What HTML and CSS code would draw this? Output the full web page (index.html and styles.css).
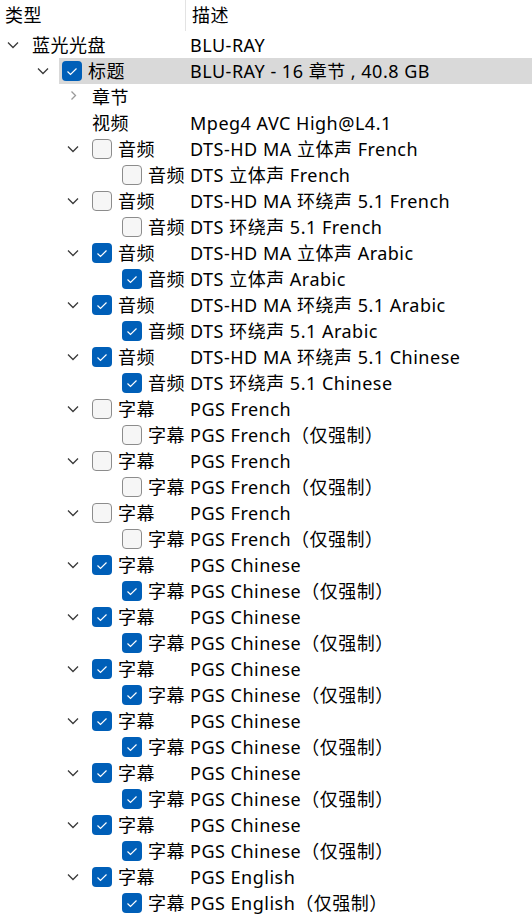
FILE: index.html
```html
<!DOCTYPE html>
<html lang="zh-CN">
<head>
<meta charset="utf-8">
<title>Tree</title>
<link rel="stylesheet" href="styles.css">
</head>
<body>
<div class="tree">
  <div class="header">
    <div class="hcell first">类型</div>
    <div class="hcell second">描述</div>
  </div>
  <div id="rows" class="rows"></div>
</div>
<script>
var D='<svg class="chev" width="32" height="26" viewBox="0 0 32 26"><path d="M8 10.5 L13 15.5 L18 10.5" fill="none" stroke="#3a3a3a" stroke-width="1.3"/></svg>';
var R='<svg class="chev" width="32" height="26" viewBox="0 0 32 26"><path d="M11.5 7.5 L15.5 11.5 L11.5 15.5" fill="none" stroke="#9a9a9a" stroke-width="1.3"/></svg>';
var N='<span class="chev"></span>';
var CK='<svg class="cb on" width="20" height="20" viewBox="0 0 20 20"><rect x="0" y="0" width="20" height="20" rx="4" fill="#005fb8"/><path d="M5.5 10.5 L8.5 13.5 L14.5 7.5" fill="none" stroke="#fff" stroke-width="1.2"/></svg>';
var UN='<svg class="cb off" width="20" height="20" viewBox="0 0 20 20"><rect x="0.5" y="0.5" width="19" height="19" rx="3.5" fill="#f6f6f6" stroke="#8c8c8c"/></svg>';
var rows=[
 [0,D,null,'蓝光光盘','BLU-RAY'],
 [1,D,1,'标题','BLU-RAY - 16 章节 , 40.8 GB','sel'],
 [2,R,null,'章节',''],
 [2,N,null,'视频','Mpeg4 AVC High@L4.1']
];
function pair(c,a,b,l1,l2){rows.push([2,D,c,a,l1]);rows.push([3,N,c,b,l2]);}
pair(0,'音频','音频','DTS-HD MA 立体声 French','DTS 立体声 French');
pair(0,'音频','音频','DTS-HD MA 环绕声 5.1 French','DTS 环绕声 5.1 French');
pair(1,'音频','音频','DTS-HD MA 立体声 Arabic','DTS 立体声 Arabic');
pair(1,'音频','音频','DTS-HD MA 环绕声 5.1 Arabic','DTS 环绕声 5.1 Arabic');
pair(1,'音频','音频','DTS-HD MA 环绕声 5.1 Chinese','DTS 环绕声 5.1 Chinese');
for(var i=0;i<3;i++)pair(0,'字幕','字幕','PGS French','PGS French（仅强制）');
for(var i=0;i<6;i++)pair(1,'字幕','字幕','PGS Chinese','PGS Chinese（仅强制）');
pair(1,'字幕','字幕','PGS English','PGS English（仅强制）');
var h='';
rows.forEach(function(r){
  var cb=r[2]===null?'':(r[2]?CK:UN);
  h+='<div class="row'+(r[5]?' '+r[5]:'')+'"><div class="cell first l'+r[0]+'">'+r[1]+cb+'<span class="label">'+r[3]+'</span></div><div class="cell second">'+r[4]+'</div></div>';
});
document.getElementById('rows').innerHTML=h;
</script>
</body>
</html>
```
FILE: styles.css
```css
html, body {
  margin: 0;
  padding: 0;
  background: #ffffff;
}
body {
  font-family: "Noto Sans", "Noto Sans CJK SC", sans-serif;
  font-size: 18px;
  letter-spacing: 0.5px;
  color: #000;
}
.tree {
  width: 532px;
}
.header {
  display: flex;
  height: 32px;
}
.hcell {
  line-height: 31px;
  height: 31px;
  white-space: nowrap;
}
.hcell.first {
  width: 186px;
  padding-left: 5px;
  box-sizing: border-box;
  border-right: 1px solid #e3e3e3;
}
.hcell.second {
  padding-left: 6px;
}
.row {
  display: flex;
  height: 26px;
  align-items: center;
}
.row.sel {
  background: linear-gradient(to right, transparent 59px, #d9d9d9 59px);
}
.cell {
  white-space: nowrap;
  line-height: 26px;
  display: flex;
  align-items: center;
}
.cell.first {
  width: 190px;
  box-sizing: border-box;
  flex: none;
}
.l0 { padding-left: 0; }
.l1 { padding-left: 30px; }
.l2 { padding-left: 60px; }
.l3 { padding-left: 90px; }
.chev {
  display: block;
  width: 32px;
  height: 26px;
  flex: none;
}
.cb {
  display: block;
  flex: none;
  margin-right: 6px;
}
.label {
  display: block;
}
```
